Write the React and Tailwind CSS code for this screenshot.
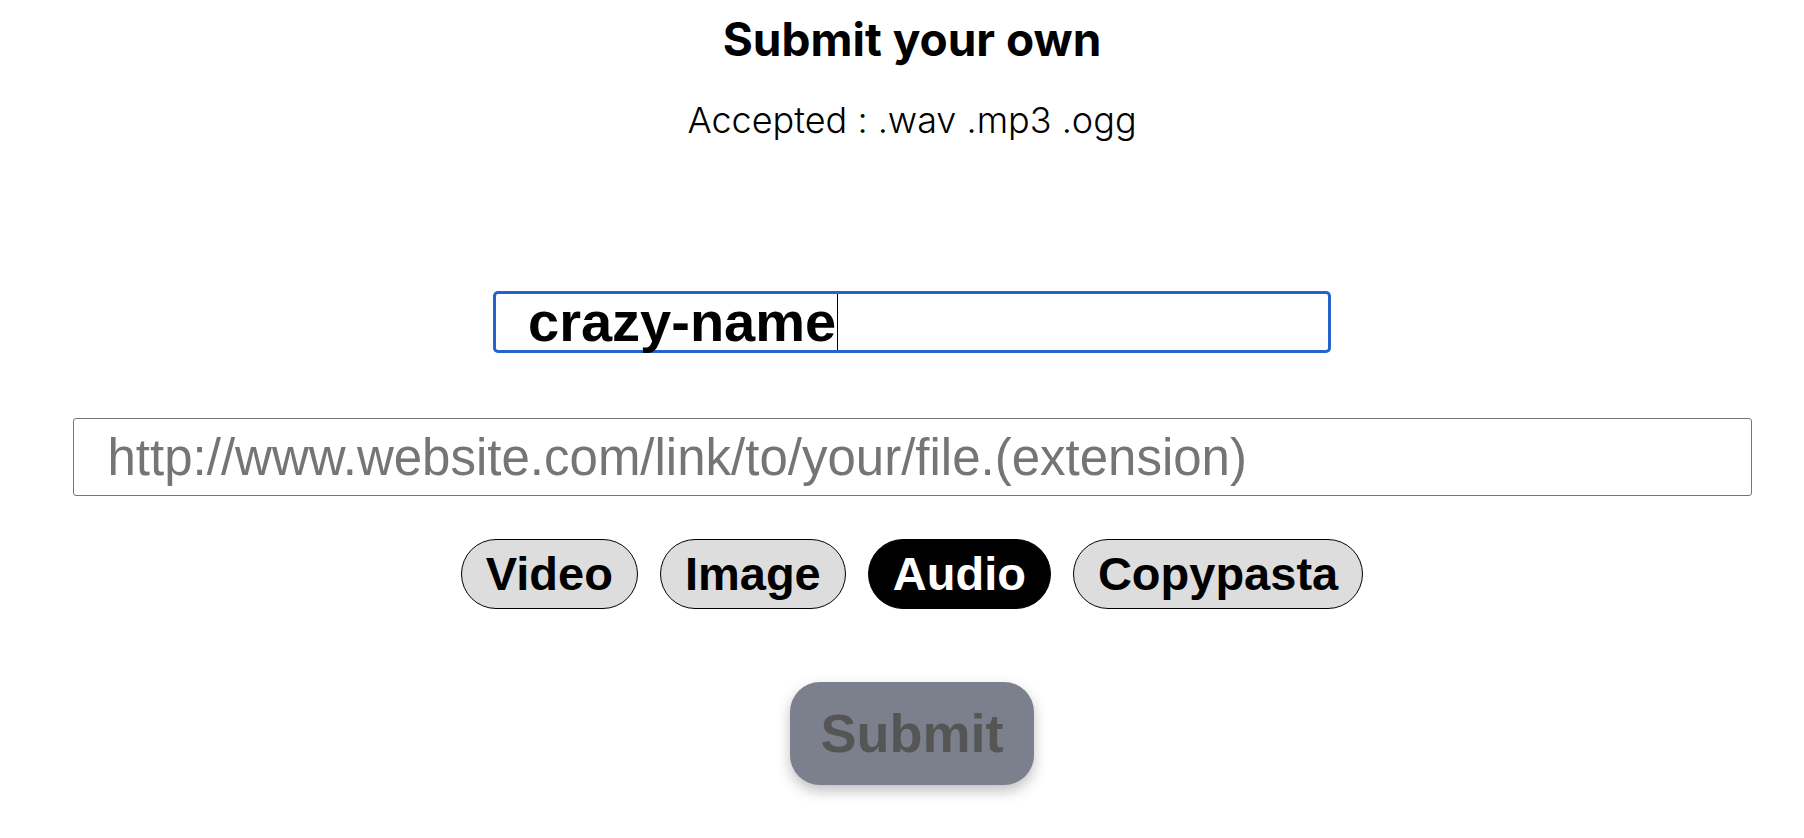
import React from 'react';

const kinds = ['Video', 'Image', 'Audio', 'Copypasta'];

const App = () => {
  const active = 'Audio';
  return (
    <div className="min-h-screen bg-white pl-[20px] pt-[11px] text-black">
      <div className="flex flex-col items-center">
        <h2 className="font-['Inter',sans-serif] font-bold text-[46px] leading-[56px]">Submit your own</h2>
        <p className="mt-[31px] font-['Inter',sans-serif] font-light text-[36px] leading-[44px]">
          Accepted : .wav .mp3 .ogg
        </p>

        {/* name field (focused) */}
        <div className="mt-[149px] w-[838px] h-[62px] border-[3px] border-[#2463c9] rounded-[5px] pl-[32px] font-['Liberation_Sans',Arial,sans-serif] font-bold text-[56px] leading-[56px] whitespace-nowrap">
          crazy-name
          <span className="inline-block w-px h-[56px] bg-black align-top ml-[1px]" />
        </div>

        <input
          type="text"
          placeholder="http://www.website.com/link/to/your/file.(extension)"
          className="mt-[65px] w-[1679px] h-[78px] border-[1.5px] border-[#767676] rounded-[3px] px-[34px] font-['Liberation_Sans',Arial,sans-serif] text-[51px] placeholder:text-[#757575] outline-none"
        />

        {/* type pills */}
        <div className="mt-[43px] flex gap-[22px]">
          {kinds.map((k) => (
            <button
              key={k}
              className={
                k === active
                  ? 'h-[70px] px-[24px] rounded-full border-[1.5px] border-black bg-black text-white font-bold text-[47px] font-["Liberation_Sans",Arial,sans-serif] flex items-center'
                  : 'h-[70px] px-[24px] rounded-full border-[1.5px] border-black bg-[#dddddd] text-black font-bold text-[47px] font-["Liberation_Sans",Arial,sans-serif] flex items-center'
              }
            >
              {k}
            </button>
          ))}
        </div>

        <button className="mt-[73px] w-[244px] h-[103px] rounded-[30px] bg-[#7b808c] text-[#555555] font-bold text-[54px] font-['Liberation_Sans',Arial,sans-serif] shadow-[0_6px_14px_rgba(0,0,0,0.25)]">
          Submit
        </button>
      </div>
    </div>
  );
};

export default App;
